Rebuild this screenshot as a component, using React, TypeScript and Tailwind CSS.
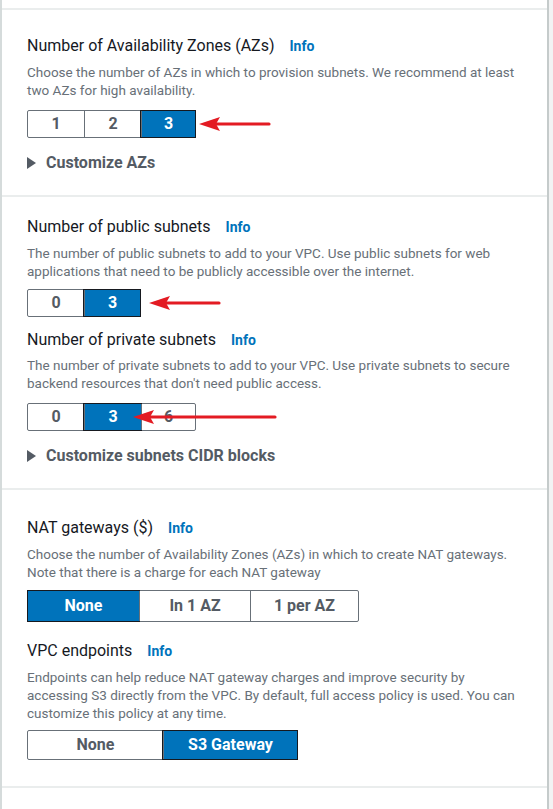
import type { ReactNode } from "react";

type Option = { label: string; width: number };

function Arrow({ left, length }: { left: number; length: number }) {
  return (
    <svg
      className="absolute top-1/2 -translate-y-1/2"
      style={{ left }}
      width={length}
      height={16}
      viewBox={`0 0 ${length} 16`}
    >
      <line x1={14} y1={8} x2={length - 2} y2={8} stroke="#e31b23" strokeWidth={3.2} strokeLinecap="round" />
      <path d="M0 8 L21 1 L17 8 L21 15 Z" fill="#e31b23" />
    </svg>
  );
}

function Segmented({
  options,
  selected,
  height = 28,
  children,
}: {
  options: Option[];
  selected: number;
  height?: number;
  children?: ReactNode;
}) {
  return (
    <div className="relative flex">
      <div className="flex rounded-[2px] border border-[#687078]" style={{ height }}>
        {options.map((o, i) => (
          <div
            key={o.label}
            style={{ width: o.width }}
            className={[
              "flex items-center justify-center text-[16px] font-bold",
              i > 0 ? "border-l border-[#687078]" : "",
              i === selected ? "bg-[#0073bb] text-white outline outline-1 outline-[#16191f]" : "text-[#545b64]",
            ].join(" ")}
          >
            {o.label}
          </div>
        ))}
      </div>
      {children}
    </div>
  );
}

function Title({ text, className = "" }: { text: string; className?: string }) {
  return (
    <div className={"flex h-5 items-center text-[16px] leading-5 text-[#16191f] " + className}>
      <span>{text}</span>
      <span className="ml-[15px] text-[14px] font-bold text-[#0073bb]">Info</span>
    </div>
  );
}

function Desc({ children, className = "" }: { children: ReactNode; className?: string }) {
  return <p className={"text-[13.5px] leading-[18px] text-[#687078] " + className}>{children}</p>;
}

function Expander({ text, className = "" }: { text: string; className?: string }) {
  return (
    <div className={"flex h-5 items-center gap-[10px] text-[16px] font-bold text-[#545b64] " + className}>
      <svg width={9} height={12} viewBox="0 0 9 12">
        <path d="M0 0 L9 6 L0 12 Z" fill="#545b64" />
      </svg>
      <span>{text}</span>
    </div>
  );
}

export default function App() {
  return (
    <div
      className="min-h-[809px] w-[553px] bg-[#f2f3f3]"
      style={{ fontFamily: "Roboto, 'Liberation Sans', sans-serif" }}
    >
      <div className="min-h-[809px] w-[549px] border-x-2 border-x-[#d5dbdb] border-r-[#c5cbcb] bg-white">
        <div className="h-2" />

        <section className="border-t-2 border-[#eaeded] px-[25px] pb-[22px] pt-[26px]">
          <Title text="Number of Availability Zones (AZs)" />
          <Desc className="mt-[7px]">
            Choose the number of AZs in which to provision subnets. We recommend at least two AZs for high
            availability.
          </Desc>
          <div className="mt-[11px]">
            <Segmented
              options={[
                { label: "1", width: 56 },
                { label: "2", width: 57 },
                { label: "3", width: 54 },
              ]}
              selected={2}
            >
              <Arrow left={172} length={72} />
            </Segmented>
          </div>
          <Expander text="Customize AZs" className="mt-[15px]" />
        </section>

        <section className="border-t-2 border-[#eaeded] px-[25px] pb-[22px] pt-[20px]">
          <Title text="Number of public subnets" />
          <Desc className="mt-[7px]">
            The number of public subnets to add to your VPC. Use public subnets for web applications that need to be
            publicly accessible over the internet.
          </Desc>
          <div className="mt-[9px]">
            <Segmented
              options={[
                { label: "0", width: 56 },
                { label: "3", width: 56 },
              ]}
              selected={1}
            >
              <Arrow left={122} length={72} />
            </Segmented>
          </div>
          <Title text="Number of private subnets" className="mt-[13px]" />
          <Desc className="mt-[6px]">
            The number of private subnets to add to your VPC. Use private subnets to secure backend resources that
            don't need public access.
          </Desc>
          <div className="mt-[11px]">
            <Segmented
              options={[
                { label: "0", width: 56 },
                { label: "3", width: 57 },
                { label: "6", width: 54 },
              ]}
              selected={1}
            >
              <Arrow left={106} length={144} />
            </Segmented>
          </div>
          <Expander text="Customize subnets CIDR blocks" className="mt-[15px]" />
        </section>

        <section className="border-t-2 border-[#eaeded] px-[25px] pb-[26px] pt-[28px]">
          <Title text="NAT gateways ($)" />
          <Desc className="mt-[7px]">
            Choose the number of Availability Zones (AZs) in which to create NAT gateways. Note that there is a charge
            for each NAT gateway
          </Desc>
          <div className="mt-[9px]">
            <Segmented
              height={32}
              options={[
                { label: "None", width: 111 },
                { label: "In 1 AZ", width: 111 },
                { label: "1 per AZ", width: 108 },
              ]}
              selected={0}
            />
          </div>
          <Title text="VPC endpoints" className="mt-[19px]" />
          <Desc className="mt-[7px]">
            Endpoints can help reduce NAT gateway charges and improve security by accessing S3 directly from the VPC.
            By default, full access policy is used. You can customize this policy at any time.
          </Desc>
          <div className="mt-[8px]">
            <Segmented
              height={30}
              options={[
                { label: "None", width: 135 },
                { label: "S3 Gateway", width: 134 },
              ]}
              selected={1}
            />
          </div>
        </section>

        <div className="border-t-2 border-[#eaeded]" />
      </div>
    </div>
  );
}
